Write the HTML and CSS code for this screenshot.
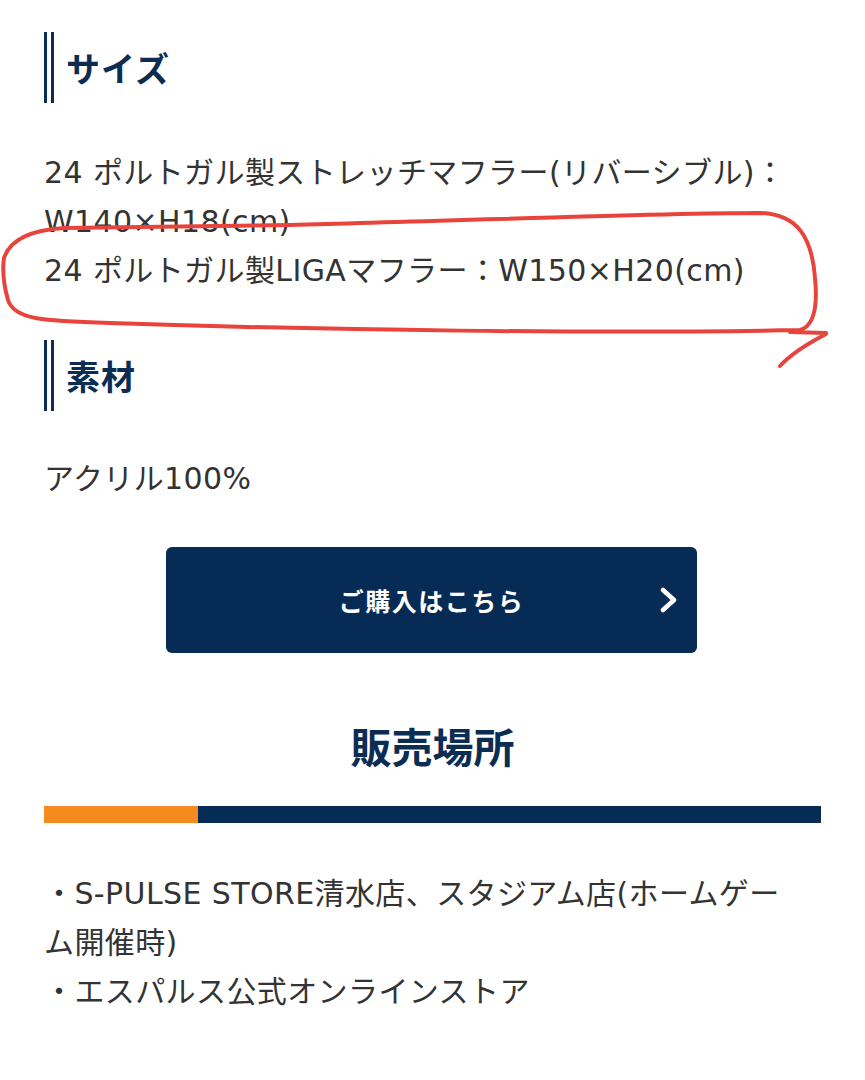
FILE: index.html
```html
<!DOCTYPE html>
<html lang="ja">
<head>
<meta charset="utf-8">
<link rel="stylesheet" href="styles.css">
</head>
<body>
<div class="page">
  <h2 class="hd"><span class="bars"></span><span class="hd-text">サイズ</span></h2>
  <p class="txt txt-size">24 ポルトガル製ストレッチマフラー(リバーシブル)：W140×H18(cm)<br>24 ポルトガル製LIGAマフラー：W150×H20(cm)</p>
  <h2 class="hd hd-2"><span class="bars"></span><span class="hd-text">素材</span></h2>
  <p class="txt txt-mat">アクリル100%</p>
  <a class="btn" href="#"><span class="btn-space"></span><span class="btn-text">ご購入はこちら</span><svg class="btn-chev" width="18" height="26" viewBox="0 0 18 26"><polyline points="3,3 14,13 3,23" fill="none" stroke="#fff" stroke-width="4.5" stroke-linecap="round" stroke-linejoin="round"/></svg></a>
  <h2 class="title">販売場所</h2>
  <div class="rule"><span class="rule-accent"></span><span class="rule-main"></span></div>
  <p class="txt txt-list">・S-PULSE STORE清水店、スタジアム店(ホームゲーム開催時)<br>・エスパルス公式オンラインストア</p>
  <svg class="mark" width="865" height="400" viewBox="0 0 865 400">
    <path d="M 4 258 C 10 240, 30 230, 64 228 L 290 225 C 460 221, 650 213, 760 213 C 798 214, 812 238, 815 278 C 818 308, 814 326, 800 330 C 600 334, 320 330, 110 323 C 45 321, 14 320, 8 300 C 4 286, 2 272, 4 258" fill="none" stroke="#e8443b" stroke-width="4" stroke-linecap="round"/>
    <path d="M 790 332 L 826 333 M 826 334 C 805 345, 790 355, 780 366" fill="none" stroke="#e8443b" stroke-width="4" stroke-linecap="round"/>
  </svg>
</div>
</body>
</html>
```
FILE: styles.css
```css
html, body {
  margin: 0;
  padding: 0;
  background: #fff;
}
body {
  font-family: "DejaVu Sans", "Noto Sans CJK JP", sans-serif;
  color: #333;
}
.page {
  position: relative;
  padding: 32px 44px 40px;
}
.hd {
  display: flex;
  align-items: center;
  height: 71px;
  margin: 0;
  color: #0b2d54;
  font-family: "Noto Sans CJK JP", sans-serif;
}
.hd-2 {
  margin-top: 45px;
}
.bars {
  width: 4px;
  height: 71px;
  border-left: 3px solid #0b2d54;
  border-right: 3px solid #0b2d54;
}
.hd-text {
  margin-left: 12px;
  font-size: 34px;
  font-weight: 700;
  letter-spacing: 0.03em;
  line-height: 1;
}
.txt {
  margin: 45px 0 0;
  padding-right: 16px;
  font-size: 30px;
  line-height: 49px;
  letter-spacing: 0.4px;
}
.txt-mat {
  margin-top: 43px;
}
.btn {
  display: grid;
  grid-template-columns: 1fr auto 1fr;
  align-items: center;
  width: 531px;
  height: 106px;
  box-sizing: border-box;
  margin: 44px 0 0 122px;
  padding: 0 19px;
  background: #062b55;
  border-radius: 6px;
  text-decoration: none;
}
.btn-text {
  color: #fff;
  font-family: "Noto Sans CJK JP", sans-serif;
  font-size: 25px;
  font-weight: 700;
  letter-spacing: 0.06em;
}
.btn-chev {
  justify-self: end;
}
.title {
  margin: 62px 0 0;
  text-align: center;
  font-family: "Noto Sans CJK JP", sans-serif;
  font-size: 41px;
  line-height: 60px;
  font-weight: 700;
  color: #0b2d54;
}
.rule {
  display: flex;
  height: 17px;
  margin-top: 31px;
}
.rule-accent {
  width: 154px;
  background: #f58a1f;
}
.rule-main {
  flex: 1;
  background: #062b55;
}
.txt-list {
  margin-top: 46px;
}
.mark {
  position: absolute;
  left: 0;
  top: 0;
  pointer-events: none;
}
```
